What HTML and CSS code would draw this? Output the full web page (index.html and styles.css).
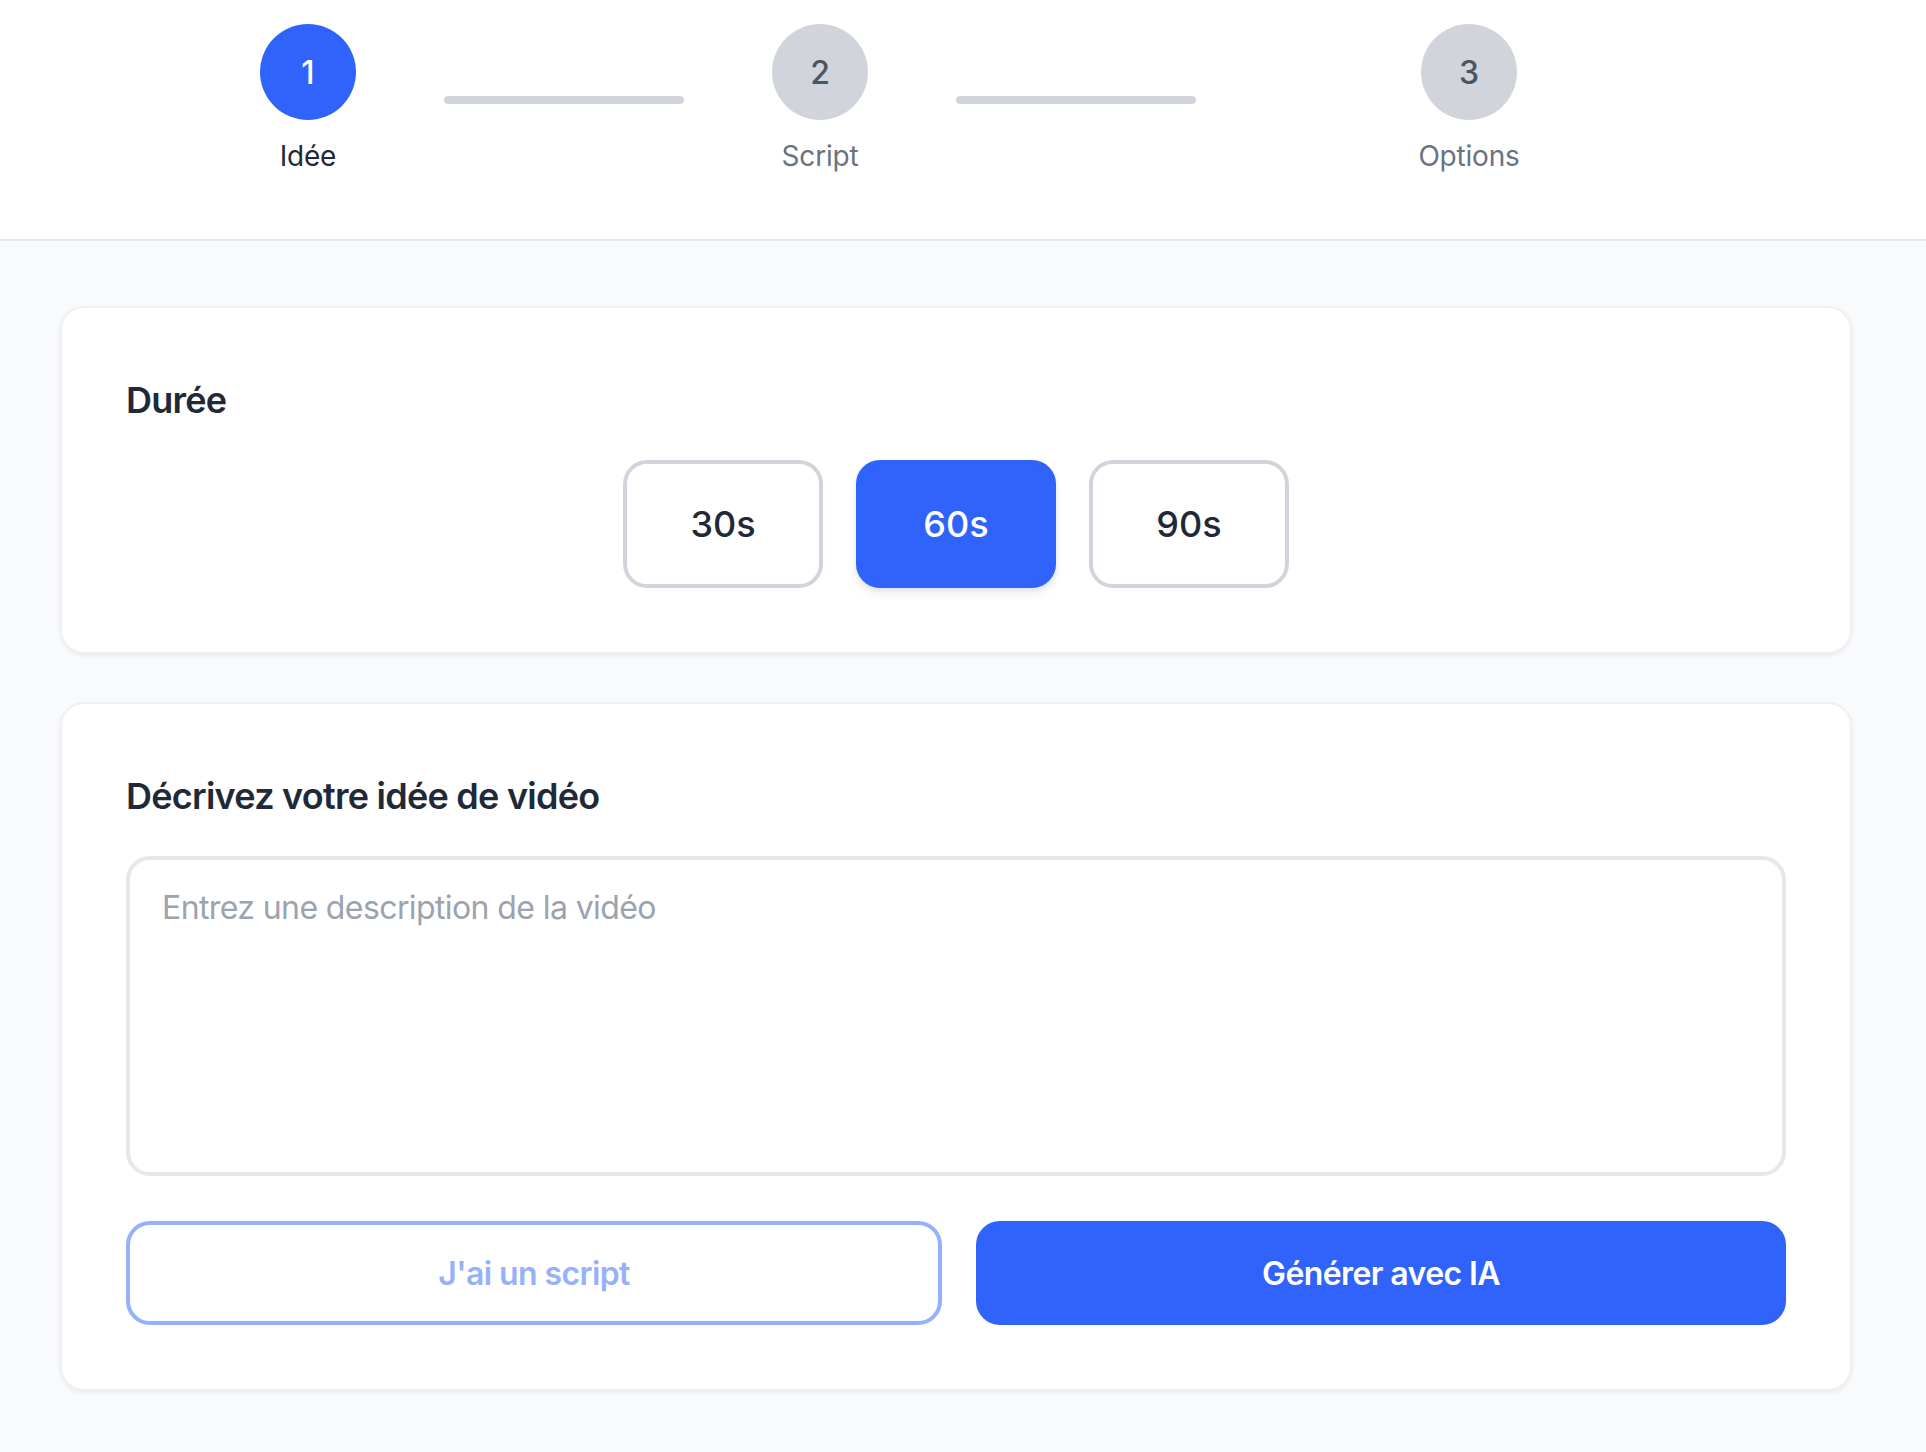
FILE: index.html
```html
<!DOCTYPE html>
<html lang="fr">
<head>
<meta charset="utf-8">
<title>Idée</title>
<link rel="stylesheet" href="styles.css">
</head>
<body>
<header class="stepbar">
  <div class="steps">
    <div class="step step-active">
      <div class="step-circle">1</div>
      <div class="step-label">Idée</div>
    </div>
    <div class="connector"></div>
    <div class="step">
      <div class="step-circle">2</div>
      <div class="step-label">Script</div>
    </div>
    <div class="connector connector-last"></div>
    <div class="step">
      <div class="step-circle">3</div>
      <div class="step-label">Options</div>
    </div>
  </div>
</header>
<main class="page">
  <section class="card">
    <h2 class="card-title">Durée</h2>
    <div class="durations">
      <button class="dur-btn">30s</button>
      <button class="dur-btn dur-selected">60s</button>
      <button class="dur-btn">90s</button>
    </div>
  </section>
  <section class="card">
    <h2 class="card-title">Décrivez votre idée de vidéo</h2>
    <textarea class="idea-input" placeholder="Entrez une description de la vidéo"></textarea>
    <div class="actions">
      <button class="btn btn-outline" disabled>J'ai un script</button>
      <button class="btn btn-primary">Générer avec IA</button>
    </div>
  </section>
</main>
</body>
</html>
```

FILE: styles.css
```css
* { box-sizing: border-box; }

html, body {
  margin: 0;
  padding: 0;
}

body {
  background: #f9fafb;
  font-family: Inter, "Noto Sans", "Liberation Sans", sans-serif;
  color: #1f2937;
  min-height: 1452px;
}

.stepbar {
  background: #ffffff;
  border-bottom: 2px solid #e5e7eb;
  height: 241px;
}

.steps {
  display: flex;
  align-items: center;
  padding: 24px 0 0 260px;
}

.step {
  width: 96px;
  display: flex;
  flex-direction: column;
  align-items: center;
  flex-shrink: 0;
}

.step-circle {
  width: 96px;
  height: 96px;
  border-radius: 50%;
  background: #d1d5db;
  color: #4b5563;
  display: flex;
  align-items: center;
  justify-content: center;
  font-size: 32px;
  font-weight: 500;
}

.step-label {
  margin-top: 16px;
  font-size: 28px;
  line-height: 40px;
  color: #6b7280;
  white-space: nowrap;
  letter-spacing: -0.2px;
}

.step-active .step-circle {
  background: #2f63fb;
  color: #ffffff;
}

.step-active .step-label {
  color: #1f2937;
}

.connector {
  width: 240px;
  height: 8px;
  border-radius: 4px;
  background: #d1d5db;
  margin: 0 88px;
  flex-shrink: 0;
}

.connector-last {
  margin-right: 225px;
}

.page {
  padding: 65px 74px 0 60px;
  display: flex;
  flex-direction: column;
  gap: 48px;
}

.card {
  background: #ffffff;
  border: 2px solid #eef0f3;
  border-radius: 24px;
  padding: 64px;
  box-shadow: 0 2px 4px rgba(17, 24, 39, 0.06);
}

.card-title {
  margin: 0 0 32px;
  font-size: 36px;
  line-height: 56px;
  font-weight: 600;
  color: #1f2937;
  letter-spacing: -0.75px;
}

.durations {
  display: flex;
  justify-content: center;
  gap: 33px;
}

.dur-btn {
  width: 200px;
  height: 128px;
  border: 4px solid #d1d5db;
  border-radius: 24px;
  background: #ffffff;
  font-family: inherit;
  font-size: 36px;
  font-weight: 500;
  color: #1f2937;
  padding: 0;
}

.dur-selected {
  background: #2f63fb;
  border-color: #2f63fb;
  color: #ffffff;
  box-shadow: 0 6px 10px rgba(17, 24, 39, 0.08), 0 2px 4px rgba(17, 24, 39, 0.05);
}

.idea-input {
  display: block;
  width: 100%;
  height: 320px;
  border: 4px solid #e5e7eb;
  border-radius: 24px;
  padding: 24px 32px;
  font-family: inherit;
  font-size: 32px;
  line-height: 48px;
  color: #1f2937;
  letter-spacing: -0.6px;
  resize: none;
  background: #ffffff;
  outline: none;
}

.idea-input::placeholder {
  color: #9ca3af;
}

.actions {
  margin-top: 45px;
  display: grid;
  grid-template-columns: 816fr 810fr;
  gap: 34px;
}

.btn {
  height: 104px;
  border-radius: 24px;
  font-family: inherit;
  font-size: 32px;
  font-weight: 600;
  letter-spacing: -0.6px;
  padding: 0;
}

.btn-outline {
  background: #ffffff;
  border: 4px solid #2f63fb;
  color: #2f63fb;
  opacity: 0.5;
}

.btn-primary {
  background: #2f63fb;
  border: 4px solid #2f63fb;
  color: #ffffff;
}
```
